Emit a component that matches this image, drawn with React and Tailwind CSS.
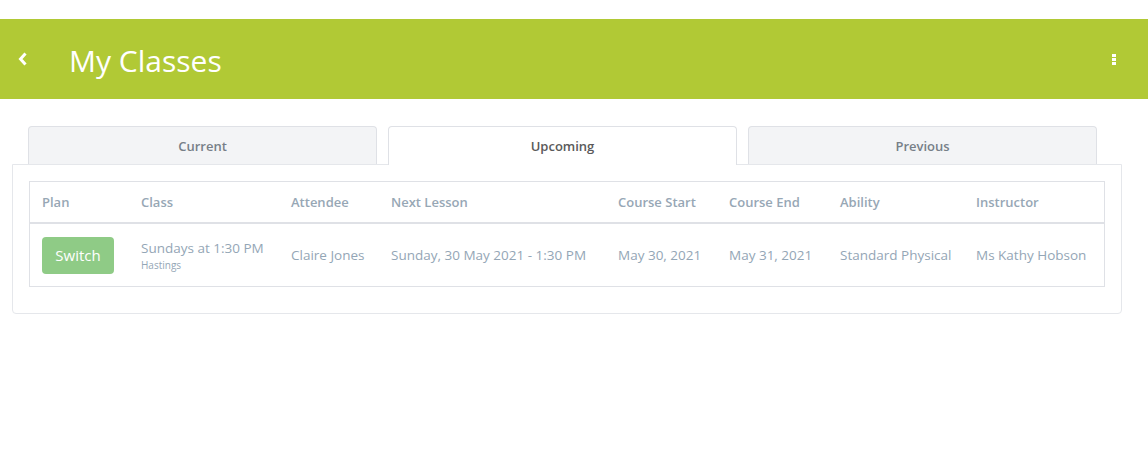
import React from 'react'

const font = { fontFamily: '"Open Sans", "Noto Sans", sans-serif' }

const cols = [
  { key: 'plan', label: 'Plan', w: 'w-[99px]' },
  { key: 'class', label: 'Class', w: 'w-[150px]' },
  { key: 'attendee', label: 'Attendee', w: 'w-[100px]' },
  { key: 'next', label: 'Next Lesson', w: 'w-[227px]' },
  { key: 'start', label: 'Course Start', w: 'w-[111px]' },
  { key: 'end', label: 'Course End', w: 'w-[111px]' },
  { key: 'ability', label: 'Ability', w: 'w-[136px]' },
  { key: 'instructor', label: 'Instructor', w: 'flex-1' },
]

const tabs = ['Current', 'Upcoming', 'Previous']

export default function App() {
  const active = 'Upcoming'

  return (
    <div className="w-[1148px] h-[452px] bg-white pt-[19px]" style={font}>
      {/* header */}
      <div className="h-[80px] bg-[#b1c935] flex items-center pl-[18px] pr-[32px]">
        <svg width="10" height="14" viewBox="0 0 10 14" className="mr-[41px]">
          <path d="M7.5 1.5 L2.5 7 L7.5 12.5" fill="none" stroke="#fff" strokeWidth="3" />
        </svg>
        <h1 className="text-white text-[30px] leading-none flex-1 mt-[3px]">My Classes</h1>
        <div className="flex flex-col gap-[1px]">
          <span className="w-[4px] h-[3px] bg-white" />
          <span className="w-[4px] h-[3px] bg-white" />
          <span className="w-[4px] h-[3px] bg-white" />
        </div>
      </div>

      {/* tabs */}
      <div className="pt-[27px] px-[12px] w-[1134px]">
        <div className="flex gap-[11px] pl-[16px] relative z-10">
          {tabs.map(t => (
            <div
              key={t}
              className={
                t === active
                  ? 'w-[349px] h-[39px] rounded-t-[4px] border border-b-0 border-[#dfe1e6] bg-white flex items-center justify-center text-[13px] font-semibold text-[#5a5a5a] pt-[1px]'
                  : 'w-[349px] h-[38px] rounded-t-[4px] border border-b-0 border-[#dfe1e6] bg-[#f3f4f6] flex items-center justify-center text-[13px] font-semibold text-[#777f88] pt-[2px]'
              }
            >
              {t}
            </div>
          ))}
        </div>

        {/* panel */}
        <div className="border border-[#e5e7eb] rounded-b-[4px] px-[16px] pt-[16px] pb-[26px] -mt-[1px]">
          <div className="border border-[#dfe1e6]">
            <div className="flex h-[42px] items-center border-b-2 border-[#dfe1e6] text-[13px] font-semibold text-[#97a7b5] pt-[1px]">
              {cols.map(c => (
                <div key={c.key} className={`${c.w} pl-[12px]`}>{c.label}</div>
              ))}
            </div>
            <div className="flex h-[62px] items-center text-[13.5px] text-[#94a6b6] pt-[1px]">
              <div className="w-[99px] pl-[12px]">
                <button className="w-[72px] h-[37px] rounded-[4px] bg-[#8fcb86] text-white text-[15px]">Switch</button>
              </div>
              <div className="w-[150px] pl-[12px] flex flex-col">
                <span className="leading-[19px]">Sundays at 1:30 PM</span>
                <span className="text-[10px] leading-[14px]">Hastings</span>
              </div>
              <div className="w-[100px] pl-[12px]">Claire Jones</div>
              <div className="w-[227px] pl-[12px]">Sunday, 30 May 2021 - 1:30 PM</div>
              <div className="w-[111px] pl-[12px]">May 30, 2021</div>
              <div className="w-[111px] pl-[12px]">May 31, 2021</div>
              <div className="w-[136px] pl-[12px]">Standard Physical</div>
              <div className="flex-1 pl-[12px]">Ms Kathy Hobson</div>
            </div>
          </div>
        </div>
      </div>
    </div>
  )
}
